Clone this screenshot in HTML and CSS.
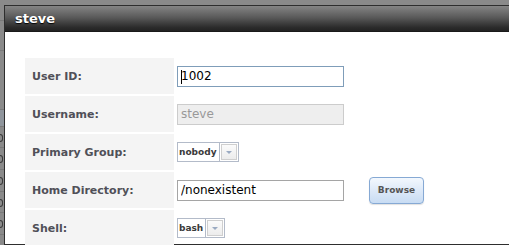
FILE: index.html
```html
<!DOCTYPE html>
<html lang="en">
  <head>
    <meta charset="UTF-8" />
    <title>steve</title>
    <link rel="stylesheet" href="styles.css">
  </head>
  <body>
    <div class="page">
      <!-- page behind the dialog, only a sliver shows -->
      <div class="behind">
        <div class="bh-row h20"></div>
        <div class="bh-row h30"></div>
        <div class="bh-row h60"></div>
        <div class="bh-row h16 sel"></div>
        <div class="bh-row h20"><span class="bh-o"></span></div>
        <div class="bh-row h22"><span class="bh-o"></span></div>
        <div class="bh-row h22"><span class="bh-o"></span></div>
        <div class="bh-row h20"><span class="bh-o"></span></div>
        <div class="bh-row h22"><span class="bh-o"></span></div>
      </div>

      <div class="dialog">
        <div class="dialog-title">steve</div>
        <div class="dialog-body">
          <div class="form-grid">
            <div class="label">User ID:</div>
            <div class="value">
              <span class="input-wrap">
                <input type="text" class="text-input focused" value="1002" />
                <span class="caret"></span>
              </span>
            </div>

            <div class="label">Username:</div>
            <div class="value">
              <input type="text" class="text-input" value="steve" disabled />
            </div>

            <div class="label">Primary Group:</div>
            <div class="value">
              <span class="select">
                <span class="select-text">nobody</span>
                <span class="select-btn"><span class="arrow"></span></span>
              </span>
            </div>

            <div class="label">Home Directory:</div>
            <div class="value">
              <input type="text" class="text-input" value="/nonexistent" />
              <button class="browse">Browse</button>
            </div>

            <div class="label">Shell:</div>
            <div class="value">
              <span class="select">
                <span class="select-text">bash</span>
                <span class="select-btn"><span class="arrow"></span></span>
              </span>
            </div>
          </div>
        </div>
      </div>
    </div>
  </body>
</html>
```

FILE: styles.css
```css
html,
body {
  margin: 0;
  height: 100%;
  overflow: hidden;
}
body {
  background: #8a8a8a;
  font-family: "DejaVu Sans", Verdana, sans-serif;
}
.page {
  display: flex;
  height: 100%;
}

/* sliver of the page underneath */
.behind {
  width: 4px;
  display: flex;
  flex-direction: column;
  flex-shrink: 0;
}
.bh-row {
  border-bottom: 1px solid #7a7a7a;
  position: relative;
}
.h16 { height: 16px; }
.h20 { height: 20px; }
.h22 { height: 21px; }
.h30 { height: 29px; }
.h60 { height: 58px; }
.sel {
  background: #8f959c;
}
.bh-o {
  display: block;
  width: 2px;
  height: 6px;
  margin-top: 7px;
  border: 1px solid #3a3a3a;
  border-left: none;
  border-radius: 0 3px 3px 0;
}

/* dialog */
.dialog {
  flex: 1;
  margin-top: 5px;
  border: 1px solid #2e2e2e;
  border-right: none;
  background: #fff;
  display: flex;
  flex-direction: column;
}
.dialog-title {
  height: 26px;
  line-height: 25px;
  padding-left: 10px;
  background: linear-gradient(to bottom, #858585 0%, #5a5a5a 45%, #2c2c2c 85%, #222 100%);
  border-bottom: 1px solid #1a1a1a;
  color: #fff;
  font-weight: bold;
  font-size: 13px;
  text-shadow: 0 1px 1px #000;
}
.dialog-body {
  padding: 26px 0 0 20px;
}

.form-grid {
  display: grid;
  grid-template-columns: 149px 1fr;
  grid-auto-rows: 36px;
  row-gap: 2px;
}
.label {
  background: #f4f4f4;
  padding-left: 7px;
  display: flex;
  align-items: center;
  font-size: 11px;
  font-weight: bold;
  color: #505058;
}
.value {
  padding-left: 3px;
  display: flex;
  align-items: center;
  gap: 25px;
}

.input-wrap {
  position: relative;
  display: inline-flex;
}
.text-input {
  box-sizing: border-box;
  width: 167px;
  height: 21px;
  margin: 0;
  padding: 0 3px;
  border: 1px solid #a5a5a5;
  font-family: "DejaVu Sans", Verdana, sans-serif;
  font-size: 12px;
  color: #000;
  background: #fff;
  outline: none;
}
.text-input.focused {
  border-color: #7f9db9;
}
.text-input:disabled {
  background: #eee;
  border-color: #ccc;
  color: #999;
}
.caret {
  position: absolute;
  left: 4px;
  top: 4px;
  width: 1px;
  height: 14px;
  background: #000;
}

.select {
  display: inline-flex;
  height: 20px;
  box-sizing: border-box;
  border: 1px solid #b3bbc9;
  background: #fff;
}
.select-text {
  padding: 0 2px 0 1px;
  font-size: 9px;
  font-weight: bold;
  color: #3a3a3a;
  line-height: 18px;
  border-right: 1px solid #b3bbc9;
}
.select-btn {
  width: 18px;
  display: flex;
  padding: 1px;
  box-sizing: border-box;
}
.select-btn .arrow {
  flex: 1;
  border: 1px solid #cfcfcf;
  background: linear-gradient(to bottom, #fbfbfb, #ececec);
  display: flex;
  align-items: center;
  justify-content: center;
}
.select-btn .arrow::after {
  content: "";
  border-left: 3px solid transparent;
  border-right: 3px solid transparent;
  border-top: 3px solid #9aaac2;
}

.browse {
  width: 55px;
  height: 27px;
  margin: 0;
  padding: 0;
  border: 1px solid #86a9d4;
  border-radius: 4px;
  background: linear-gradient(to bottom, #f3f8fe 0%, #dde9f8 50%, #c8dcf3 100%);
  box-shadow: 0 1px 1px rgba(0, 0, 0, 0.12);
  font-family: "DejaVu Sans", Verdana, sans-serif;
  font-size: 9px;
  font-weight: bold;
  color: #555;
}
```
